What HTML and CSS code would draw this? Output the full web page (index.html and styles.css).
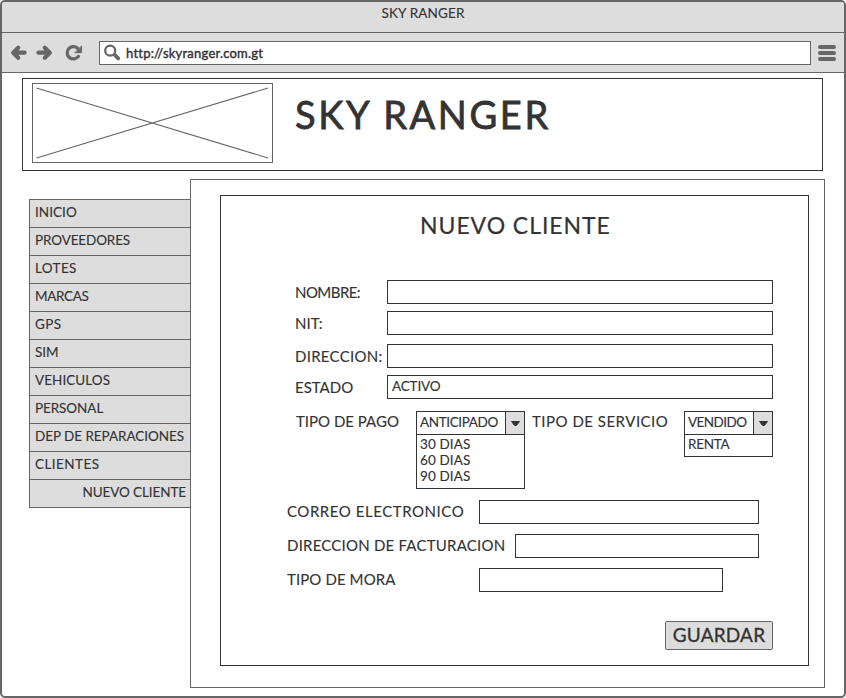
FILE: index.html
```html
<!DOCTYPE html>
<html lang="es">
<head>
<meta charset="utf-8">
<title>SKY RANGER</title>
<link rel="stylesheet" href="styles.css">
</head>
<body>
<div class="window">
  <div class="titlebar"><span class="t-window">SKY RANGER</span></div>
  <div class="toolbar">
    <svg class="nav" width="74" height="18" viewBox="0 0 74 18" fill="none" stroke="#666" stroke-linecap="round" stroke-linejoin="round">
      <path d="M8.2 3.8 3.2 8.7l5 5M4 8.7h10.6" stroke-width="4.2"/>
      <path d="m34.8 3.8 5 4.9-5 5M39 8.7H28.4" stroke-width="4.2"/>
      <path d="M68.4 12.4A6.2 6.2 0 1 1 67.6 4.2" stroke-width="3.3"/>
      <path d="M71.6 2.2v6.5h-6.5z" fill="#666" stroke-width=".8"/>
    </svg>
    <div class="address">
      <svg width="18" height="18" viewBox="0 0 18 18" fill="none" stroke="#666" stroke-linecap="round">
        <circle cx="6.2" cy="6.7" r="5" stroke-width="2.3"/>
        <path d="m11 11.2 3.2 3.2" stroke-width="3.8"/>
      </svg>
      <span class="t-url">http://skyranger.com.gt</span>
    </div>
    <svg class="menu" width="18" height="18" viewBox="0 0 18 18" stroke="#666" stroke-width="4" stroke-linecap="round">
      <path d="M2 3h14M2 9h14M2 15h14"/>
    </svg>
  </div>
  <header class="banner">
    <svg class="picture" width="241" height="80" viewBox="0 0 241 80" fill="none" stroke="#666">
      <rect x=".5" y=".5" width="240" height="79"/>
      <path d="M4.5 5 236 75M4.5 75 236 5" stroke-width="1.1"/>
    </svg>
    <h1>SKY RANGER</h1>
  </header>
  <div class="body">
    <nav class="sidebar">
      <a class="s-inicio">INICIO</a>
      <a class="s-prov">PROVEEDORES</a>
      <a class="s-lotes">LOTES</a>
      <a class="s-marcas">MARCAS</a>
      <a class="s-gps">GPS</a>
      <a class="s-sim">SIM</a>
      <a class="s-veh">VEHICULOS</a>
      <a class="s-pers">PERSONAL</a>
      <a class="s-dep">DEP DE REPARACIONES</a>
      <a class="s-clientes">CLIENTES</a>
      <a class="s-nuevo">NUEVO CLIENTE</a>
    </nav>
    <main class="content">
      <form class="form">
        <h2>NUEVO CLIENTE</h2>
        <div class="row"><label class="l-nombre">NOMBRE:</label><div class="field"></div></div>
        <div class="row row-nit"><label class="l-nit">NIT:</label><div class="field"></div></div>
        <div class="row row-dir"><label class="l-dir">DIRECCION:</label><div class="field"></div></div>
        <div class="row row-estado"><label class="l-estado">ESTADO</label><div class="field">ACTIVO</div></div>
        <div class="selects">
          <label class="l-pago">TIPO DE PAGO</label>
          <div class="select select-pago">
            <div class="value"><span class="s-anticipado">ANTICIPADO</span><i><svg width="9" height="5" viewBox="0 0 9 5"><path d="M.5.5h8L5.4 4.5H3.6z" fill="#333" stroke="#333" stroke-linejoin="round"/></svg></i></div>
            <div class="options"><span>30 DIAS</span><span>60 DIAS</span><span>90 DIAS</span></div>
          </div>
          <label class="l-servicio">TIPO DE SERVICIO</label>
          <div class="select select-servicio">
            <div class="value"><span class="s-vendido">VENDIDO</span><i><svg width="9" height="5" viewBox="0 0 9 5"><path d="M.5.5h8L5.4 4.5H3.6z" fill="#333" stroke="#333" stroke-linejoin="round"/></svg></i></div>
            <div class="options"><span class="s-renta">RENTA</span></div>
          </div>
        </div>
        <div class="row wide"><label class="l-correo">CORREO ELECTRONICO</label><div class="field"></div></div>
        <div class="row wide billing"><label class="l-fact">DIRECCION DE FACTURACION</label><div class="field"></div></div>
        <div class="row wide late"><label class="l-mora">TIPO DE MORA</label><div class="field"></div></div>
        <button type="button">GUARDAR</button>
      </form>
    </main>
  </div>
</div>
</body>
</html>
```
FILE: styles.css
```css
* { box-sizing: border-box; }
html { background: #fff; }
body {
  margin: 0;
  color: #333;
  font: 13.5px/16px Lato, "Open Sans", sans-serif;
  -webkit-text-stroke: .12px #333;
  overflow: hidden;
}
h1, h2 { margin: 0; font-weight: 400; white-space: nowrap; }
svg { display: block; flex: none; }

.window {
  width: 846px;
  height: 698px;
  border: 2px solid #666;
  border-radius: 5px;
  overflow: hidden;
  background: #fff;
}
.titlebar {
  height: 31px;
  border-bottom: 1px solid #666;
  background: #ddd;
  text-align: center;
  line-height: 22px;
}
.t-window { letter-spacing: .15px; }
.toolbar {
  display: flex;
  align-items: center;
  height: 40px;
  padding: 0 8px;
  border-bottom: 1px solid #666;
  background: #ddd;
}
.nav { margin-right: 15px; }
.address {
  display: flex;
  align-items: center;
  flex: none;
  width: 712px;
  height: 24px;
  padding-left: 4px;
  border: 1px solid #666;
  background: #fff;
}
.t-url { margin-left: 4px; font-size: 13px; letter-spacing: .22px; -webkit-text-stroke: .4px #333; }
.menu { margin-left: 7px; }

.banner {
  display: flex;
  width: 801px;
  height: 93px;
  margin: 5px 0 0 20px;
  border: 1px solid #333;
}
.picture { margin: 4px 0 0 9px; }
h1 {
  margin: 12px 0 0 22px;
  font-size: 38px;
  line-height: 46px;
  letter-spacing: 2.6px;
  -webkit-text-stroke: .8px #333;
}

.body { display: flex; margin-top: 8px; padding-left: 27px; }
.sidebar {
  width: 161px;
  height: 309px;
  margin-top: 20px;
  border: solid #666;
  border-width: 0 0 1px 1px;
  background: #ddd;
}
.sidebar a {
  display: block;
  height: 28px;
  padding-left: 5px;
  border-top: 1px solid #666;
  line-height: 25px;
  white-space: nowrap;
}
.s-inicio { letter-spacing: .05px; }
.s-prov { letter-spacing: -.12px; }
.s-lotes { letter-spacing: .35px; }
.s-marcas { letter-spacing: -.35px; }
.s-gps { letter-spacing: .4px; }
.s-sim { letter-spacing: -.1px; }
.s-veh { letter-spacing: .05px; }
.s-pers { letter-spacing: -.08px; }
.s-dep { letter-spacing: -.05px; }
.s-clientes { letter-spacing: .45px; }
.sidebar .s-nuevo { padding: 0 4px 0 0; text-align: right; letter-spacing: -.1px; }

.content {
  width: 635px;
  height: 509px;
  padding: 15px 0 0 29px;
  border: 1px solid #666;
}
.form { width: 589px; height: 471px; border: 1px solid #333; }
h2 {
  margin: 15px 0 0 199px;
  font-size: 23px;
  line-height: 28px;
  letter-spacing: .95px;
  -webkit-text-stroke: .2px #333;
}
.row { display: flex; align-items: center; height: 24px; margin: 41px 35px 0 74px; }
label { flex: none; font-size: 15px; line-height: 24px; white-space: nowrap; }
.row label { width: 92px; }
.field {
  flex: 1;
  height: 24px;
  padding-left: 4px;
  border: 1px solid #333;
  line-height: 20px;
  letter-spacing: -.15px;
}
.row-nit { margin-top: 7px; }
.row-dir { margin-top: 9px; }
.row-estado { margin-top: 7px; }
.l-nombre { letter-spacing: -.55px; }
.l-nit { letter-spacing: 0; }
.l-dir { letter-spacing: .28px; }
.l-estado { letter-spacing: 0; }
.l-pago { width: 120px; letter-spacing: 0; }
.l-servicio { width: 152px; letter-spacing: .5px; }
.l-correo { letter-spacing: .55px; }
.l-fact { letter-spacing: .22px; }
.l-mora { letter-spacing: .1px; }

.selects { display: flex; align-items: flex-start; height: 78px; margin: 12px 35px 0 75px; }
.selects label { margin-top: -2px; }
.select { border: 1px solid #333; white-space: nowrap; }
.select-pago { width: 109px; margin-right: 7px; }
.select-servicio { width: 89px; }
.value { display: flex; justify-content: space-between; height: 23px; padding-left: 3px; border-bottom: 1px solid #333; line-height: 20px; }
.value i { display: grid; place-items: center; width: 19px; border-left: 1px solid #333; background: #ddd; }
.options { padding: 1px 0 4px 3px; letter-spacing: .1px; }
.options span { display: block; }
.s-anticipado { letter-spacing: -.38px; }
.s-vendido { letter-spacing: -.55px; }
.options .s-renta { letter-spacing: -.25px; }

.wide { margin: 11px 49px 0 66px; }
.wide label { width: 192px; line-height: 22px; padding-bottom: 2px; }
.billing { margin-top: 10px; }
.billing label { width: 228px; }
.late { margin: 10px 85px 0 66px; }
button {
  display: block;
  width: 108px;
  height: 29px;
  margin: 29px 35px 0 auto;
  padding: 0 0 2px;
  border: 1px solid #666;
  border-radius: 2px;
  background: #ddd;
  color: #333;
  font: 19px/25px Lato, "Open Sans", sans-serif;
  letter-spacing: .2px;
  -webkit-text-stroke: .3px #333;
}
```
